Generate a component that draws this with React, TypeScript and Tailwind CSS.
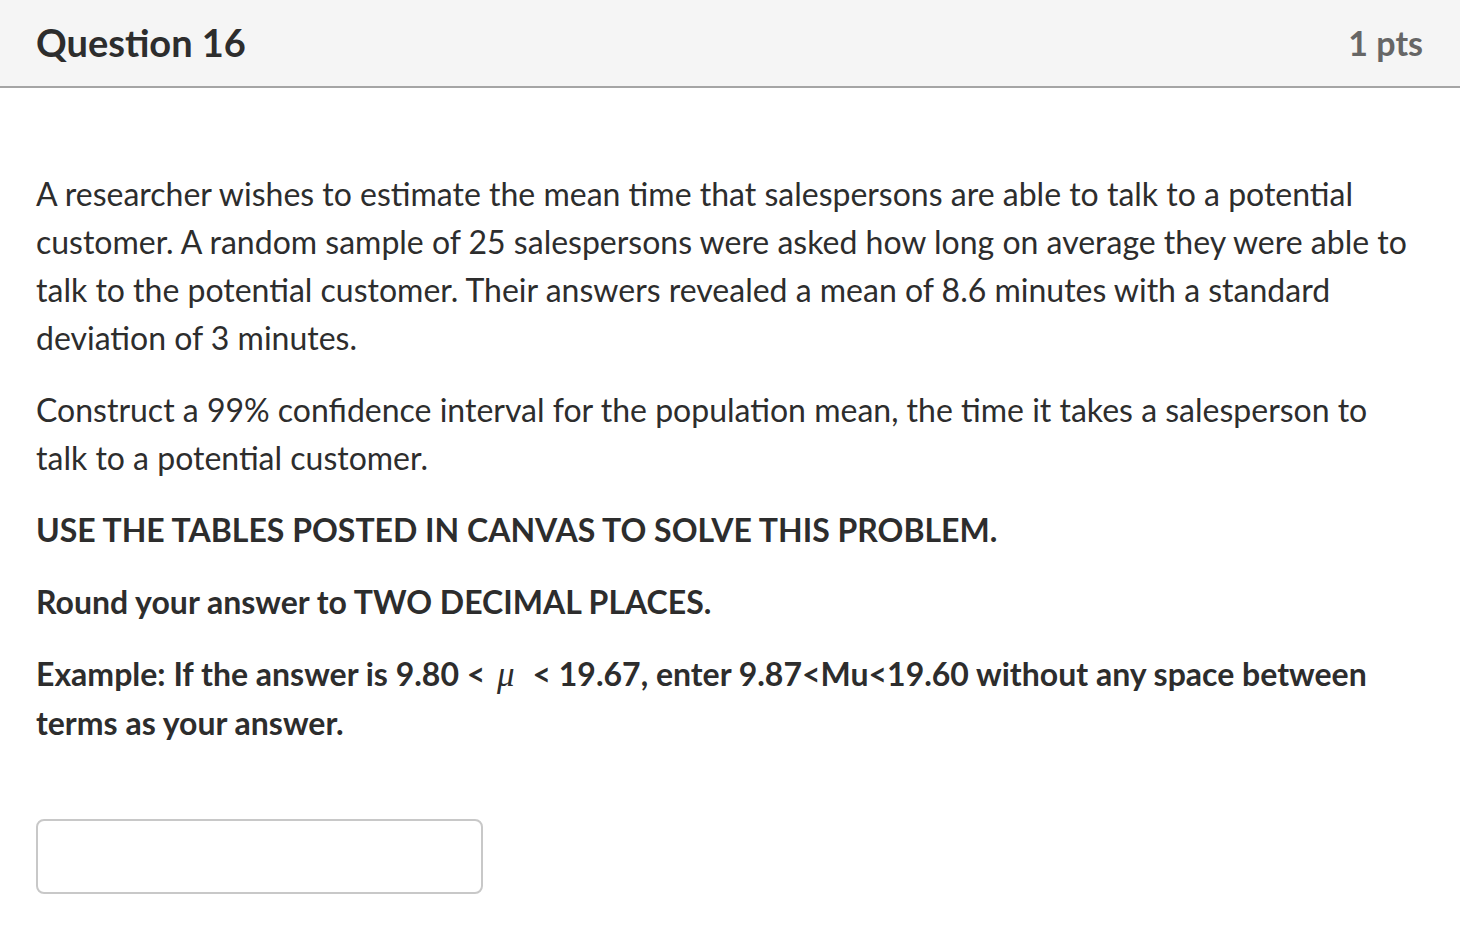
export default function App() {
  return (
    <div className="min-h-screen bg-white text-[#2d2d2d]" style={{ fontFamily: 'Lato, "Noto Sans", sans-serif' }}>
      <div className="h-[88px] bg-[#f5f5f5] border-b-2 border-[#a5a5a5] flex items-center justify-between pl-[36px] pr-[37px] pb-[2px]">
        <h2 className="text-[38px] font-bold text-[#2d2d2d]">Question 16</h2>
        <div className="text-[34px] font-bold text-[#666666]">1 pts</div>
      </div>

      <div className="pl-[36px] pr-[37px] pt-[82px] text-[32px] leading-[48px]">
        <p>
          A researcher wishes to estimate the mean time that salespersons are able to talk to a potential customer. A
          random sample of 25 salespersons were asked how long on average they were able to talk to the potential
          customer. Their answers revealed a mean of 8.6 minutes with a standard deviation of 3 minutes.
        </p>
        <p className="mt-6">
          Construct a 99% confidence interval for the population mean, the time it takes a salesperson to talk to a
          potential customer.
        </p>
        <p className="mt-6 font-bold">USE THE TABLES POSTED IN CANVAS TO SOLVE THIS PROBLEM.</p>
        <p className="mt-6 font-bold">Round your answer to TWO DECIMAL PLACES.</p>
        <p className="mt-6 font-bold">
          Example: If the answer is 9.80 &lt;{' '}
          <span className="inline-block italic font-normal text-[35px] ml-[4px] mr-[10px]" style={{ fontFamily: '"Liberation Serif", serif' }}>μ</span>
          {' '}&lt; 19.67, enter 9.87&lt;Mu&lt;19.60 without any space between terms as your answer.
        </p>

        <div className="mt-[72px]">
          <input
            type="text"
            className="w-[447px] h-[75px] border-2 border-[#c8c8c8] rounded-lg bg-white outline-none"
          />
        </div>
      </div>
    </div>
  );
}
